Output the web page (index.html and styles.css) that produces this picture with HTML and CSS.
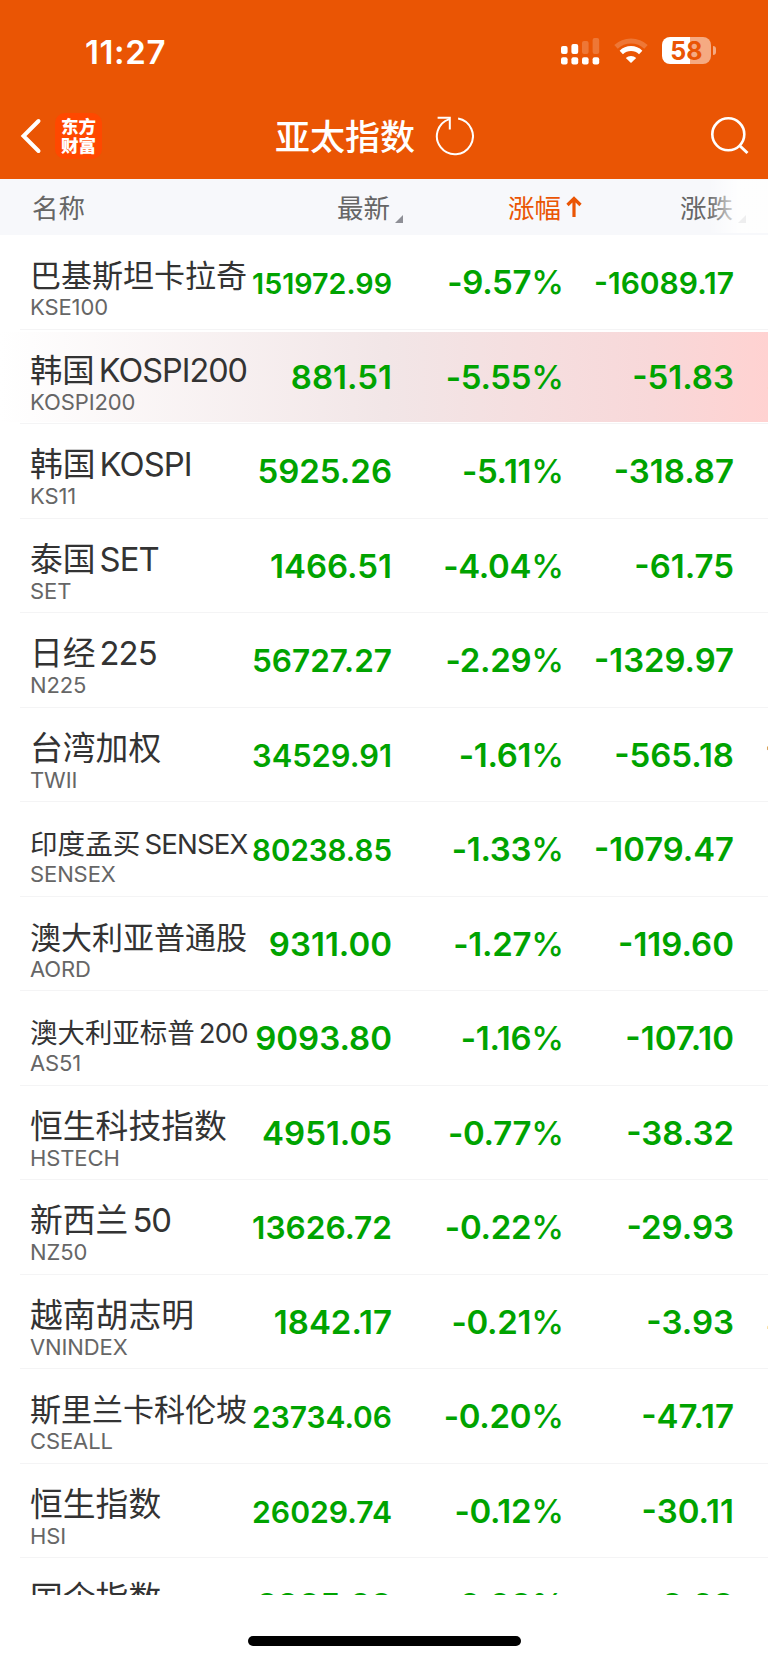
FILE: index.html
```html
<!DOCTYPE html>
<html lang="zh-CN">
<head>
    <meta charset="UTF-8">
    <meta name="viewport" content="width=device-width, initial-scale=1.0">
    <title>亚太指数</title>
    <link rel="stylesheet" href="styles.css">
</head>
<body>
    <header class="header">
        <div class="status-bar">
            <span class="time">11:27</span>
            <div class="status-icons">
                <svg class="signal" viewBox="0 0 39 28" width="39" height="28" fill="#fff">
                    <rect x="0" y="9" width="6.6" height="8" rx="2"/>
                    <rect x="10.4" y="7" width="6.8" height="10" rx="2"/>
                    <rect x="21" y="4" width="6.6" height="13" rx="2" opacity=".2"/>
                    <rect x="31.6" y="1" width="6.6" height="16" rx="2" opacity=".2"/>
                    <rect x="0" y="20.3" width="6.6" height="7.2" rx="2"/>
                    <rect x="10.4" y="20.3" width="6.8" height="7.2" rx="2"/>
                    <rect x="21" y="20.3" width="6.6" height="7.2" rx="2"/>
                    <rect x="31.6" y="20.3" width="6.6" height="7.2" rx="2"/>
                </svg>
                <svg class="wifi" viewBox="0 0 34 26" width="34" height="26" fill="none">
                    <path d="M2 8.8a22 22 0 0 1 30 0" stroke="#fff" stroke-opacity=".2" stroke-width="5"/>
                    <path d="M7.3 14.4a14 14 0 0 1 19.4 0" stroke="#fff" stroke-width="4.8"/>
                    <path d="M11.8 20a7.5 7.5 0 0 1 10.4 0L17 25z" fill="#fff"/>
                </svg>
                <div class="battery"><span>58</span></div>
            </div>
        </div>
        <nav class="nav">
            <div class="nav-left">
                <svg viewBox="0 0 22 36" width="22" height="36" fill="none" stroke="#fff" stroke-width="4" stroke-linecap="round" stroke-linejoin="miter">
                    <path d="M18.5 3L3.5 18l15 15"/>
                </svg>
                <div class="logo"><span>东方</span><span>财富</span></div>
            </div>
            <h1>亚太指数</h1>
            <svg class="refresh" viewBox="0 0 40 40" width="40" height="40" fill="none" stroke="#fff" stroke-width="2">
                <path d="M24.1 2.5A18 18 0 1 1 15.3 3.1"/>
                <path d="M3.6 1.8H15.8V13.5"/>
            </svg>
            <svg class="search" viewBox="0 0 40 40" width="40" height="40" fill="none" stroke="#fff" stroke-width="2.6">
                <circle cx="18.3" cy="18.3" r="16"/>
                <path d="M29.5 29.5L37.5 37" stroke-width="3"/>
            </svg>
        </nav>
    </header>
    <div class="table-head">
        <span class="col-name">名称</span>
        <span class="col-price">最新<i class="corner"></i></span>
        <span class="col-pct active">涨幅<svg viewBox="0 0 16 22" width="16" height="22" fill="none" stroke="#ea5504" stroke-width="3.2"><path d="M8 21V3M1.5 9L8 2.5L14.5 9"/></svg></span>
        <span class="col-diff">涨跌<i class="corner"></i></span>
    </div>
    <main class="list" id="list"></main>
    <footer class="home"><div class="home-bar"></div></footer>

    <script>
        const quotes = [
            ['巴基斯坦卡拉奇', 'KSE100', '151972.99', '-9.57%', '-16089.17', ''],
            ['韩国KOSPI200', 'KOSPI200', '881.51', '-5.55%', '-51.83', '2'],
            ['韩国KOSPI', 'KS11', '5925.26', '-5.11%', '-318.87', ''],
            ['泰国SET', 'SET', '1466.51', '-4.04%', '-61.75', ''],
            ['日经225', 'N225', '56727.27', '-2.29%', '-1329.97', ''],
            ['台湾加权', 'TWII', '34529.91', '-1.61%', '-565.18', '1'],
            ['印度孟买SENSEX', 'SENSEX', '80238.85', '-1.33%', '-1079.47', ''],
            ['澳大利亚普通股', 'AORD', '9311.00', '-1.27%', '-119.60', ''],
            ['澳大利亚标普200', 'AS51', '9093.80', '-1.16%', '-107.10', ''],
            ['恒生科技指数', 'HSTECH', '4951.05', '-0.77%', '-38.32', ''],
            ['新西兰50', 'NZ50', '13626.72', '-0.22%', '-29.93', ''],
            ['越南胡志明', 'VNINDEX', '1842.17', '-0.21%', '-3.93', '4'],
            ['斯里兰卡科伦坡', 'CSEALL', '23734.06', '-0.20%', '-47.17', ''],
            ['恒生指数', 'HSI', '26029.74', '-0.12%', '-30.11', ''],
            ['国企指数', 'HSCEI', '8985.28', '-0.08%', '-8.68', '']
        ];

        // latin part of a name gets a small gap before it
        function formatName(name) {
            return name.replace(/([A-Z0-9]+)$/, '<span class="latin">$1</span>');
        }

        function showList() {
            let html = '';
            for (const [name, code, price, pct, diff, more] of quotes) {
                html += `<div class="row${code === 'KOSPI200' ? ' flash' : ''}">
                    <div class="col-name">
                        <div class="name"><span class="fit">${formatName(name)}</span></div>
                        <div class="code">${code}</div>
                    </div>
                    <div class="col-price"><span class="fit">${price}</span></div>
                    <div class="col-pct">${pct.replace('%', '<span class="unit">%</span>')}</div>
                    <div class="col-diff"><span class="fit">${diff}</span></div>
                    <div class="col-more">${more}</div>
                </div>`;
            }
            document.getElementById('list').innerHTML = html;
        }

        // shrink long texts until they fit in their column
        function fitTexts() {
            document.querySelectorAll('.fit').forEach(el => {
                const max = el.parentElement.clientWidth;
                const width = el.getBoundingClientRect().width;
                if (width > max) {
                    const size = parseFloat(getComputedStyle(el).fontSize);
                    el.style.fontSize = (size * max / width).toFixed(2) + 'px';
                }
            });
        }

        showList();
        fitTexts();
    </script>
</body>
</html>
```
FILE: styles.css
```css
* {
    box-sizing: border-box;
}
body {
    margin: 0;
    width: 768px;
    height: 1663px;
    overflow: hidden;
    display: flex;
    flex-direction: column;
    background-color: #fff;
    font-family: 'Inter', 'Noto Sans CJK SC', sans-serif;
}
.header {
    height: 179px;
    background-color: #ea5504;
    color: #fff;
    flex-shrink: 0;
}
.status-bar {
    display: flex;
    justify-content: space-between;
    height: 92px;
    padding: 31px 52px 0 85px;
}
.time {
    font-size: 33px;
    line-height: 42px;
    font-weight: 600;
    letter-spacing: 0.6px;
}
.status-icons {
    display: flex;
    align-items: flex-start;
    padding-top: 6px;
}
.wifi {
    margin: 1px 0 0 14px;
}
.battery {
    position: relative;
    width: 49px;
    height: 27px;
    margin-left: 14px;
    margin-right: 5px;
    border-radius: 8px;
    background: linear-gradient(to right, #fff 28px, #f5aa82 28px);
    color: #ea5504;
    text-align: center;
    font-size: 25px;
    line-height: 28px;
    font-weight: 700;
}
.battery::after {
    content: '';
    position: absolute;
    right: -5px;
    top: 9px;
    width: 3px;
    height: 9px;
    border-radius: 0 4px 4px 0;
    background-color: #f5aa82;
}
.nav {
    display: flex;
    align-items: center;
    height: 88px;
    padding: 0 18px 0 20px;
}
.nav-left {
    display: flex;
    align-items: center;
    gap: 13px;
    width: 255px;
}
.logo {
    display: flex;
    flex-direction: column;
    align-items: center;
    justify-content: center;
    width: 47px;
    height: 46px;
    border-radius: 10px;
    background-color: #ff4800;
    font-size: 17.5px;
    line-height: 19px;
    font-weight: 900;
}
.nav h1 {
    margin: 1px 0 0;
    font-size: 35px;
    line-height: 40px;
    font-weight: 500;
}
.refresh {
    margin-left: 19px;
}
.search {
    margin-left: auto;
}
.table-head {
    position: relative;
    display: flex;
    flex-shrink: 0;
    height: 56px;
    padding-left: 31px;
    background-color: #f7f8fb;
    color: #666;
    font-size: 26.5px;
    line-height: 58px;
}
.table-head::after {
    content: '';
    position: absolute;
    right: 0;
    top: 1px;
    width: 60px;
    height: 53px;
    background: linear-gradient(to right, rgba(255, 255, 255, 0), rgba(255, 255, 255, 0.85) 30px);
}
.table-head .active {
    color: #ea5504;
}
.table-head .active svg {
    margin-left: 5px;
}
.table-head .col-name {
    padding-left: 1px;
}
.table-head .col-price {
    width: 155px;
}
.table-head .col-pct {
    width: 179px;
}
.table-head .col-diff {
    width: 164px;
}
.corner {
    display: inline-block;
    margin-left: 5px;
    border-left: 8px solid transparent;
    border-bottom: 8px solid #8e8f96;
    vertical-align: -5px;
}
.list {
    height: 1360px;
    overflow: hidden;
    flex-shrink: 0;
}
.row {
    position: relative;
    display: flex;
    height: 94.5px;
    padding-left: 30px;
}
.row::after {
    content: '';
    position: absolute;
    left: 20px;
    right: 0;
    bottom: 0;
    height: 1px;
    background-color: #f4f4f5;
}
.flash {
    background: linear-gradient(to right, #fff, #f2e6e7 50%, #f8d8d9 85%, #ffd2d1) 0 2px / 100% 90px no-repeat;
}
.col-name {
    width: 217px;
    flex-shrink: 0;
    white-space: nowrap;
}
.col-price, .col-pct, .col-diff {
    flex-shrink: 0;
    text-align: right;
    white-space: nowrap;
}
.row .col-price, .row .col-pct, .row .col-diff {
    color: #00a300;
    font-size: 33px;
    line-height: 95px;
    font-weight: 600;
}
.row .col-price {
    width: 140px;
    margin-left: 5px;
}
.row .col-pct {
    width: 140px;
    margin-left: 31px;
    letter-spacing: -0.3px;
}
.row .col-diff {
    width: 140px;
    margin-left: 31px;
}
.unit {
    font-weight: 500;
    letter-spacing: -1px;
}
.col-more {
    margin-left: 32px;
    font-size: 33px;
    line-height: 95px;
    color: #333;
}
.name {
    height: 59px;
    font-size: 32.8px;
    line-height: 81px;
    color: #333;
}
.latin {
    margin-left: 4px;
    letter-spacing: -0.03em;
}
.code {
    height: 26px;
    font-size: 22px;
    line-height: 27px;
    letter-spacing: -0.1px;
    color: #666;
}
.home {
    display: flex;
    justify-content: center;
    padding-top: 41px;
}
.home-bar {
    width: 273px;
    height: 10px;
    border-radius: 5px;
    background-color: #000;
}
```
